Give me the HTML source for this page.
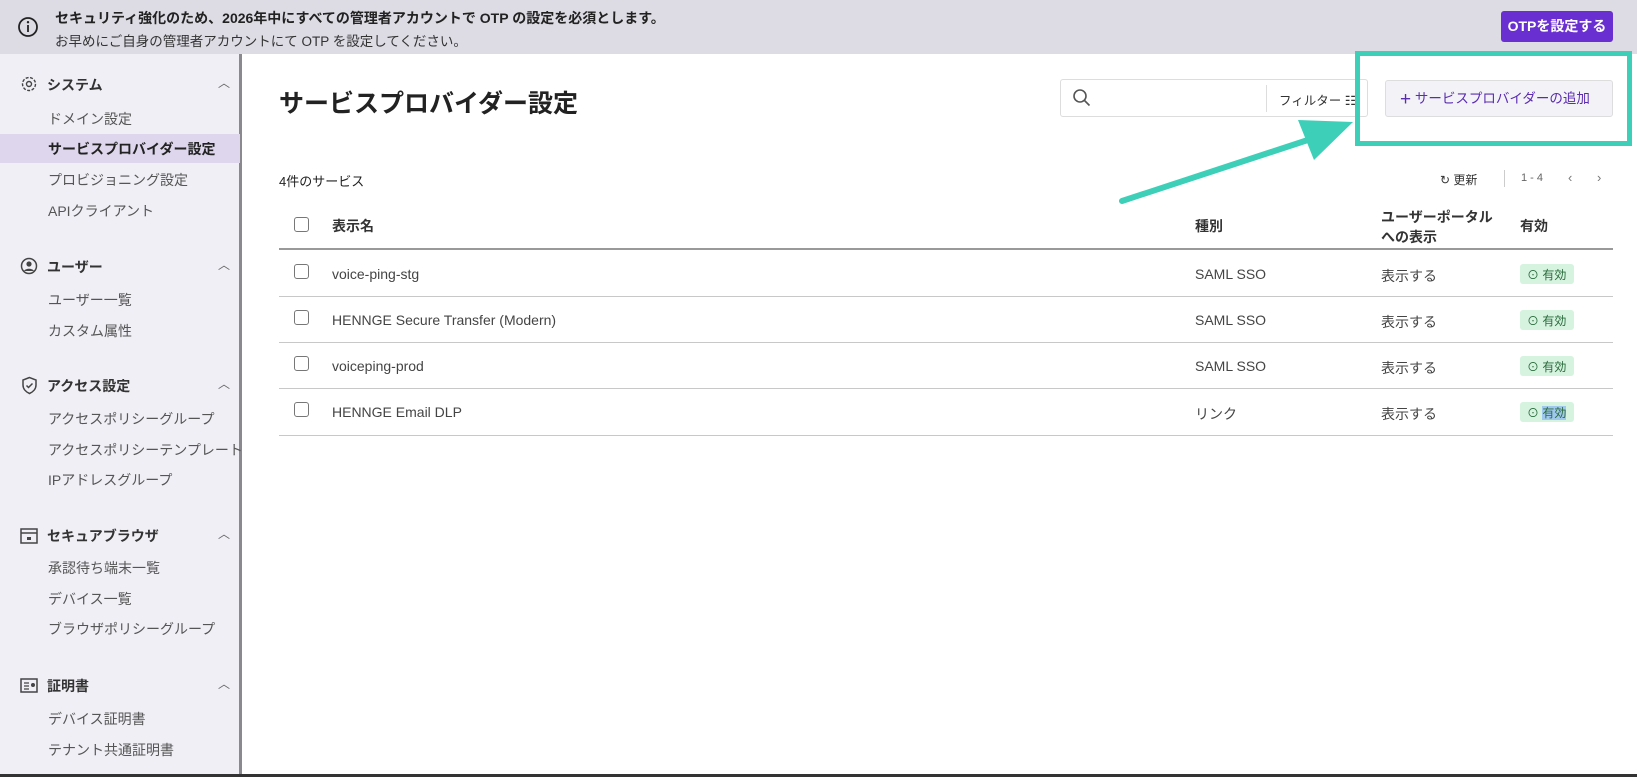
<!DOCTYPE html>
<html><head><meta charset="utf-8"><style>
*{margin:0;padding:0;box-sizing:border-box}
body{width:1637px;height:777px;overflow:hidden;background:#fff;font-family:"Liberation Sans","Noto Sans CJK JP",sans-serif;color:#222;position:relative}
.abs{position:absolute;white-space:nowrap}
.banner{position:absolute;left:0;top:0;width:1637px;height:54px;background:#dddce4}
.side{position:absolute;left:0;top:54px;width:242px;height:723px;background:#f0eff5;border-right:3px solid #8a8a8e}
.sec{font-size:14px;font-weight:bold;color:#333}
.it{font-size:14px;color:#555;left:48px}
.car{left:218px;font-size:12px;color:#666}
.th{font-size:14px;font-weight:bold;color:#333}
.td{font-size:14px;color:#444}
.hl{position:absolute;left:279px;width:1334px;height:1px;background:#c8c8c8}
.cb{position:absolute;left:294px;width:15px;height:15px;border:1.5px solid #777;border-radius:3px;background:#fff}
.badge{position:absolute;left:1520px;width:54px;height:20px;background:#d5f3df;border-radius:3px;font-size:12px;color:#2a6b3c;padding:2px 0 0 7px}
</style></head><body>
<div class="banner"></div>
<svg class="abs" style="left:17px;top:16px" width="22" height="22" viewBox="0 0 22 22"><circle cx="11" cy="11" r="9" fill="none" stroke="#222" stroke-width="1.8"/><rect x="10.1" y="9" width="1.8" height="7" fill="#222"/><circle cx="11" cy="6.2" r="1.2" fill="#222"/></svg>
<div class="abs" style="left:55px;top:8px;font-size:14px;font-weight:bold;color:#222">セキュリティ強化のため、2026年中にすべての管理者アカウントで OTP の設定を必須とします。</div>
<div class="abs" style="left:55px;top:30px;font-size:13.5px;color:#333">お早めにご自身の管理者アカウントにて OTP を設定してください。</div>
<div class="abs" style="left:1501px;top:11px;width:112px;height:31px;background:#6a2fd0;border-radius:3px;color:#fff;font-size:14px;font-weight:bold;text-align:center;line-height:31px">OTPを設定する</div>

<div class="side"></div>
<svg class="abs" style="left:20px;top:75px" width="18" height="18" viewBox="0 0 18 18"><circle cx="9" cy="9" r="6.5" fill="none" stroke="#444" stroke-width="1.4" stroke-dasharray="3 1.5"/><circle cx="9" cy="9" r="2.5" fill="none" stroke="#444" stroke-width="1.4"/></svg>
<div class="abs sec" style="left:47px;top:75px">システム</div><div class="abs car" style="top:74px">︿</div>
<div class="abs it" style="top:109px">ドメイン設定</div>
<div class="abs" style="left:0;top:134px;width:240px;height:29px;background:#ddd6ec"></div>
<div class="abs it" style="top:139px;font-weight:bold;color:#222">サービスプロバイダー設定</div>
<div class="abs it" style="top:170px">プロビジョニング設定</div>
<div class="abs it" style="top:201px">APIクライアント</div>

<svg class="abs" style="left:20px;top:257px" width="18" height="18" viewBox="0 0 18 18"><circle cx="9" cy="9" r="7.5" fill="none" stroke="#444" stroke-width="1.5"/><circle cx="9" cy="7" r="2.6" fill="#444"/><path d="M4 14c1.5-3 8.5-3 10 0" fill="#444"/></svg>
<div class="abs sec" style="left:47px;top:257px">ユーザー</div><div class="abs car" style="top:256px">︿</div>
<div class="abs it" style="top:290px">ユーザー一覧</div>
<div class="abs it" style="top:321px">カスタム属性</div>

<svg class="abs" style="left:21px;top:376px" width="17" height="19" viewBox="0 0 17 19"><path d="M8.5 1.5L2 4v5c0 4 3 7 6.5 8.5C12 16 15 13 15 9V4z" fill="none" stroke="#444" stroke-width="1.5"/><path d="M5.5 9.5l2 2 4-4" fill="none" stroke="#444" stroke-width="1.5"/></svg>
<div class="abs sec" style="left:47px;top:376px">アクセス設定</div><div class="abs car" style="top:375px">︿</div>
<div class="abs it" style="top:409px">アクセスポリシーグループ</div>
<div class="abs it" style="top:440px">アクセスポリシーテンプレート</div>
<div class="abs it" style="top:470px">IPアドレスグループ</div>

<svg class="abs" style="left:20px;top:528px" width="18" height="16" viewBox="0 0 18 16"><rect x="1" y="1" width="16" height="14" fill="none" stroke="#444" stroke-width="1.5"/><path d="M1 5h16" stroke="#444" stroke-width="1.5"/><path d="M7 9h4v3H7z" fill="#444"/></svg>
<div class="abs sec" style="left:47px;top:526px">セキュアブラウザ</div><div class="abs car" style="top:525px">︿</div>
<div class="abs it" style="top:558px">承認待ち端末一覧</div>
<div class="abs it" style="top:589px">デバイス一覧</div>
<div class="abs it" style="top:619px">ブラウザポリシーグループ</div>

<svg class="abs" style="left:20px;top:678px" width="18" height="15" viewBox="0 0 18 15"><rect x="1" y="1" width="16" height="13" fill="none" stroke="#444" stroke-width="1.5"/><path d="M4 5h5M4 8h5M4 11h5" stroke="#444" stroke-width="1.3"/><circle cx="13" cy="7" r="2" fill="#444"/></svg>
<div class="abs sec" style="left:47px;top:676px">証明書</div><div class="abs car" style="top:675px">︿</div>
<div class="abs it" style="top:709px">デバイス証明書</div>
<div class="abs it" style="top:740px">テナント共通証明書</div>
<div class="abs" style="left:0;top:774px;width:1637px;height:3px;background:#333"></div>

<div class="abs" style="left:279px;top:84px;font-size:25px;font-weight:bold;color:#222">サービスプロバイダー設定</div>
<div class="abs" style="left:1060px;top:79px;width:308px;height:38px;border:1px solid #ddd;border-radius:3px;background:#fff"></div>
<svg class="abs" style="left:1072px;top:88px" width="20" height="20" viewBox="0 0 20 20"><circle cx="8" cy="8" r="6" fill="none" stroke="#555" stroke-width="1.6"/><path d="M12.5 12.5l5 5" stroke="#555" stroke-width="1.6"/></svg>
<div class="abs" style="left:1266px;top:85px;width:1px;height:27px;background:#ddd"></div>
<div class="abs" style="left:1279px;top:90px;font-size:12.5px;color:#333">フィルター ☷</div>
<div class="abs" style="left:1385px;top:80px;width:228px;height:37px;background:#f3f2f7;border:1px solid #ddd;border-radius:3px;color:#5a2cb0;font-size:13.5px;line-height:35px;padding-left:14px"><span style="font-size:19px;vertical-align:-2px">+</span> サービスプロバイダーの追加</div>
<div class="abs" style="left:1355px;top:51px;width:277px;height:95px;border:5px solid #3ecfb8"></div>
<svg class="abs" style="left:1115px;top:110px" width="245" height="100" viewBox="0 0 245 100"><path d="M7 91L205 26" stroke="#3ecfb8" stroke-width="6" stroke-linecap="round"/><path d="M183 10L238 12L199 50z" fill="#3ecfb8"/></svg>

<div class="abs" style="left:279px;top:171px;font-size:13px;color:#222">4件のサービス</div>
<div class="abs" style="left:1440px;top:171px;font-size:12px;color:#333">↻ 更新</div>
<div class="abs" style="left:1504px;top:170px;width:1px;height:17px;background:#ccc"></div>
<div class="abs" style="left:1521px;top:172px;font-size:11px;color:#666">1 - 4</div>
<div class="abs" style="left:1568px;top:170px;font-size:13px;color:#777">‹</div>
<div class="abs" style="left:1597px;top:170px;font-size:13px;color:#777">›</div>

<div class="cb" style="top:217px"></div>
<div class="abs th" style="left:332px;top:216px">表示名</div>
<div class="abs th" style="left:1195px;top:216px">種別</div>
<div class="abs th" style="left:1381px;top:207px;line-height:20px">ユーザーポータル<br>への表示</div>
<div class="abs th" style="left:1520px;top:216px">有効</div>
<div class="hl" style="top:248px;height:2px;background:#999"></div>

<div class="cb" style="top:264px"></div><div class="abs td" style="left:332px;top:266px">voice-ping-stg</div><div class="abs td" style="left:1195px;top:266px">SAML SSO</div><div class="abs td" style="left:1381px;top:266px">表示する</div><div class="badge" style="top:264px">⊙ 有効</div>
<div class="hl" style="top:296px"></div>
<div class="cb" style="top:310px"></div><div class="abs td" style="left:332px;top:312px">HENNGE Secure Transfer (Modern)</div><div class="abs td" style="left:1195px;top:312px">SAML SSO</div><div class="abs td" style="left:1381px;top:312px">表示する</div><div class="badge" style="top:310px">⊙ 有効</div>
<div class="hl" style="top:342px"></div>
<div class="cb" style="top:356px"></div><div class="abs td" style="left:332px;top:358px">voiceping-prod</div><div class="abs td" style="left:1195px;top:358px">SAML SSO</div><div class="abs td" style="left:1381px;top:358px">表示する</div><div class="badge" style="top:356px">⊙ 有効</div>
<div class="hl" style="top:388px"></div>
<div class="cb" style="top:402px"></div><div class="abs td" style="left:332px;top:404px">HENNGE Email DLP</div><div class="abs td" style="left:1195px;top:404px">リンク</div><div class="abs td" style="left:1381px;top:404px">表示する</div><div class="badge" style="top:402px">⊙ <span style="background:#9fc8ef">有効</span></div>
<div class="hl" style="top:435px"></div>
</body></html>
